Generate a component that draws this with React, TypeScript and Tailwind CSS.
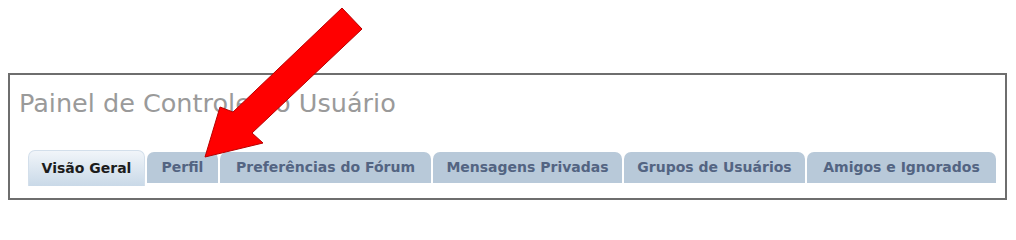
const tabs = [
  { label: "Visão Geral", w: "w-[117px]", active: true },
  { label: "Perfil", w: "w-[71px]" },
  { label: "Preferências do Fórum", w: "w-[211px]" },
  { label: "Mensagens Privadas", w: "w-[189px]" },
  { label: "Grupos de Usuários", w: "w-[181px]" },
  { label: "Amigos e Ignorados", w: "w-[189px]" },
]

function Arrow() {
  return (
    <svg
      className="pointer-events-none absolute left-0 top-0"
      width="1016"
      height="209"
      viewBox="0 0 1016 209"
    >
      <polygon
        points="342,8 362,29 252,133 263,143 205,157 220,107 233,112"
        fill="#ff0000"
        stroke="#b80000"
        strokeWidth="1"
        strokeLinejoin="miter"
      />
    </svg>
  )
}

export default function App() {
  return (
    <div className="relative h-[209px] w-[1016px] overflow-hidden bg-white pt-[73px] pl-[8px] font-['DejaVu_Sans',sans-serif]">
      <div className="h-[127px] w-[999px] border-2 border-[#6e6e6e] bg-white">
        <h2 className="ml-[9px] mt-[13px] text-[25.5px] leading-[30px] font-normal text-[#9a9a9a]">
          {"Painel de Controle do Usuário"}
        </h2>
        <nav className="ml-[18px] mt-[32px] flex items-start gap-[2px]">
          {tabs.map((t) =>
            t.active ? (
              <div
                key={t.label}
                className={`${t.w} flex h-[36px] items-center justify-center rounded-t-[7px] border border-b-0 border-[#d3dfeb] bg-gradient-to-b from-[#f1f5f9] to-[#c9d9e8] text-[14px] font-bold text-[#1c1c1c]`}
              >
                {t.label}
              </div>
            ) : (
              <div
                key={t.label}
                className={`${t.w} mt-[2px] flex h-[31px] items-center justify-center rounded-t-[7px] bg-[#b8c9d9] text-[14px] font-bold text-[#536482]`}
              >
                {t.label}
              </div>
            )
          )}
        </nav>
      </div>
      <Arrow />
    </div>
  )
}
